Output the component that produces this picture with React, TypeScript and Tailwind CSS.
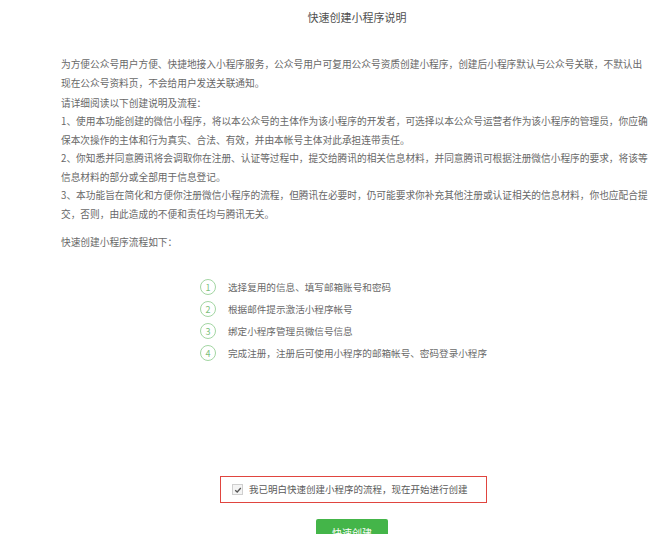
// Quick-create mini program: explanation page

const steps = [
  "选择复用的信息、填写邮箱账号和密码",
  "根据邮件提示激活小程序帐号",
  "绑定小程序管理员微信号信息",
  "完成注册，注册后可使用小程序的邮箱帐号、密码登录小程序",
]

export default function App() {
  return (
    <div
      className="w-[668px] h-[534px] overflow-hidden bg-white text-[#686868]"
      style={{ fontFamily: '"Noto Sans CJK SC", "Noto Sans", sans-serif' }}
    >
      <div className="ml-[61px] w-[592px] flex flex-col">
        <h1 className="mt-[7px] h-[20px] leading-[20px] text-center text-[11px] text-[#505050]">
          快速创建小程序说明
        </h1>

        <div className="mt-[28px] text-[9.7px] leading-[18.5px] whitespace-nowrap">
          <p>
            为方便公众号用户方便、快捷地接入小程序服务，公众号用户可复用公众号资质创建小程序，创建后小程序默认与公众号关联，不默认出
            <br />
            现在公众号资料页，不会给用户发送关联通知。
          </p>
          <p className="mt-[1.5px]">
            请详细阅读以下创建说明及流程：
            <br />
            1、使用本功能创建的微信小程序，将以本公众号的主体作为该小程序的开发者，可选择以本公众号运营者作为该小程序的管理员，你应确
            <br />
            保本次操作的主体和行为真实、合法、有效，并由本帐号主体对此承担连带责任。
            <br />
            2、你知悉并同意腾讯将会调取你在注册、认证等过程中，提交给腾讯的相关信息材料，并同意腾讯可根据注册微信小程序的要求，将该等
            <br />
            信息材料的部分或全部用于信息登记。
            <br />
            3、本功能旨在简化和方便你注册微信小程序的流程，但腾讯在必要时，仍可能要求你补充其他注册或认证相关的信息材料，你也应配合提
            <br />
            交，否则，由此造成的不便和责任均与腾讯无关。
          </p>
          <p className="mt-[9.5px]">快速创建小程序流程如下：</p>
        </div>

        {/* steps */}
        <ol className="mt-[25px] ml-[139px] flex flex-col">
          {steps.map((s, i) => (
            <li key={i} className="h-[22px] flex items-center gap-[12px]">
              <span className="w-[16px] h-[16px] rounded-full border-[1.5px] border-[#a3d6a3] text-[#7cbf7c] text-[9px] leading-none flex items-center justify-center">
                {i + 1}
              </span>
              <span className="text-[9.6px] text-[#6a6a6a]">{s}</span>
            </li>
          ))}
        </ol>

        {/* agreement */}
        <div className="mt-[112px] ml-[159px] self-start flex items-center gap-[6px] w-[267px] h-[27px] border-[1.5px] border-[#e0453f] pl-[11px]">
          <span className="w-[11px] h-[11px] border border-[#cfcfcf] bg-[#f4f4f4] flex items-center justify-center">
            <svg viewBox="0 0 10 10" className="w-[8px] h-[8px]">
              <path d="M1.5 5.2 L4 7.5 L8.5 2.5" fill="none" stroke="#555" strokeWidth="1.6" />
            </svg>
          </span>
          <span className="text-[9.5px] text-[#5a5a5a]">我已明白快速创建小程序的流程，现在开始进行创建</span>
        </div>

        <button className="mt-[16px] ml-[255px] self-start w-[72px] h-[26px] rounded-[2px] bg-[#44b549] text-white text-[10px]">
          快速创建
        </button>
      </div>
    </div>
  )
}
